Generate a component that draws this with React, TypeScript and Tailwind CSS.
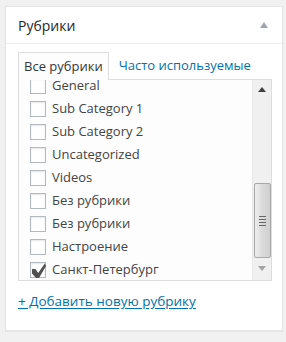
import React from 'react';

const categories = [
  { name: 'General', checked: false },
  { name: 'Sub Category 1', checked: false },
  { name: 'Sub Category 2', checked: false },
  { name: 'Uncategorized', checked: false },
  { name: 'Videos', checked: false },
  { name: 'Без рубрики', checked: false },
  { name: 'Без рубрики', checked: false },
  { name: 'Настроение', checked: false },
  { name: 'Санкт-Петербург', checked: true },
];

const Checkbox = ({ checked }: { checked: boolean }) => (
  <span className="relative w-[16px] h-[16px] shrink-0 border border-[#b4b9be] bg-white shadow-[inset_0_1px_2px_rgba(0,0,0,0.1)]">
    {checked && (
      <svg className="absolute left-[0px] top-[0px]" width="16" height="16" viewBox="0 0 16 16">
        <path d="M1 6 L4.5 6 L7.2 10 L13.8 0.5 L15 3 L8 15 L5 15 L1 10.5 Z" fill="#505050" />
      </svg>
    )}
  </span>
);

export default function App() {
  return (
    <div className="w-[286px] h-[342px] bg-[#f1f1f1] pt-[6px] pl-[5px] font-['Open_Sans',sans-serif]">
      <div className="w-[278px] h-[325px] border border-[#e5e5e5] bg-white shadow-[0_1px_1px_rgba(0,0,0,0.04)]">
        {/* Header */}
        <div className="h-[37px] border-b border-[#eeeeee] flex items-center justify-between pl-[12px] pr-[14px]">
          <span className="text-[14px] text-[#23282d]">Рубрики</span>
          <svg width="8" height="6" viewBox="0 0 8 6">
            <path d="M0 6 L4 0 L8 6 Z" fill="#a0a5aa" />
          </svg>
        </div>

        {/* Body */}
        <div className="pt-[8px] pl-[12px] pr-[10px]">
          <div className="flex items-end text-[13px]">
            <div className="relative z-10 -mb-px h-[28px] border border-b-0 border-[#dddddd] bg-[#fdfdfd] px-[5px] flex items-center text-[#32373c]">
              Все рубрики
            </div>
            <div className="h-[27px] ml-[10px] flex items-center text-[#0073aa]">Часто используемые</div>
          </div>

          {/* List */}
          <div className="relative h-[202px] border border-[#dddddd] bg-[#fdfdfd] flex overflow-hidden">
            <div className="flex-1 overflow-hidden">
              <div className="-mt-[6px] pl-[11px]">
                {categories.map((c, i) => (
                  <div key={i} className="h-[23px] flex items-center gap-[6px] text-[13px] text-[#444444]">
                    <Checkbox checked={c.checked} />
                    <span>{c.name}</span>
                  </div>
                ))}
              </div>
            </div>

            {/* Scrollbar */}
            <div className="w-[19px] bg-[#f0f0f0] border-l border-[#e8e8e8] flex flex-col items-center">
              <div className="h-[17px] w-full flex items-center justify-center mt-[1px]">
                <svg width="8" height="5" viewBox="0 0 8 5">
                  <path d="M0 5 L4 0 L8 5 Z" fill="#404040" />
                </svg>
              </div>
              <div className="mt-[85px] w-[17px] h-[75px] rounded-[2px] border border-[#a8a8a8] bg-gradient-to-r from-[#eeeeee] via-[#dadada] to-[#cfcfcf] flex flex-col items-center justify-center gap-[2px]">
                <span className="w-[7px] h-px bg-[#666]" />
                <span className="w-[7px] h-px bg-[#666]" />
                <span className="w-[7px] h-px bg-[#666]" />
                <span className="w-[7px] h-px bg-[#666]" />
              </div>
              <div className="h-[20px] w-full flex items-center justify-center">
                <svg width="8" height="5" viewBox="0 0 8 5">
                  <path d="M0 0 L8 0 L4 5 Z" fill="#a3a3a3" />
                </svg>
              </div>
            </div>
          </div>

          <div className="mt-[11px] text-[13.5px] leading-[18px]">
            <span className="text-[#0073aa] underline underline-offset-[2px]">+ Добавить новую рубрику</span>
          </div>
        </div>
      </div>
    </div>
  );
}
